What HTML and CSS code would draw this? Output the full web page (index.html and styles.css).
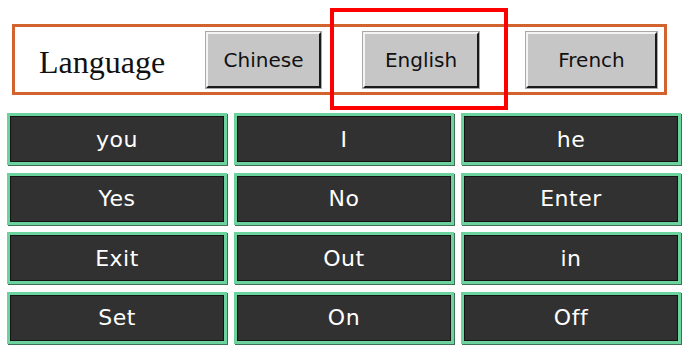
FILE: index.html
```html
<!DOCTYPE html>
<html>
<head>
<meta charset="utf-8">
<link rel="stylesheet" href="styles.css">
</head>
<body>
<div class="page">
  <div class="lang-bar">
    <span class="lang-label">Language</span>
    <button class="lang-btn btn-chinese">Chinese</button>
    <button class="lang-btn btn-english">English</button>
    <button class="lang-btn btn-french">French</button>
  </div>
  <div class="highlight"></div>
  <div class="grid">
    <button class="word">you</button>
    <button class="word">I</button>
    <button class="word">he</button>
    <button class="word">Yes</button>
    <button class="word">No</button>
    <button class="word">Enter</button>
    <button class="word">Exit</button>
    <button class="word">Out</button>
    <button class="word">in</button>
    <button class="word">Set</button>
    <button class="word">On</button>
    <button class="word">Off</button>
  </div>
</div>
</body>
</html>
```

FILE: styles.css
```css
html, body {
  margin: 0;
  padding: 0;
  background: #ffffff;
}
.page {
  position: relative;
  width: 688px;
  height: 353px;
  padding-top: 24px;
  box-sizing: border-box;
}
.lang-bar {
  margin-left: 12px;
  width: 655px;
  height: 71px;
  box-sizing: border-box;
  border: 3px solid #d2632e;
  display: flex;
  align-items: center;
}
.lang-label {
  font-family: "Liberation Serif", serif;
  font-size: 32px;
  color: #111;
  margin-left: 24px;
  margin-top: 6px;
  width: 167px;
}
.lang-btn {
  font-family: "DejaVu Sans", sans-serif;
  font-size: 20px;
  color: #111;
  background: #c6c6c6;
  height: 56px;
  box-sizing: border-box;
  border: 2px solid;
  border-color: #f4f4f4 #1a1a1a #1a1a1a #f4f4f4;
  box-shadow: 0 0 0 1px #a8a8a8;
  padding: 0;
  margin-top: 1px;
}
.btn-chinese { width: 115px; margin-left: 0; }
.btn-english { width: 116px; margin-left: 42px; }
.btn-french { width: 131px; margin-left: 47px; }
.highlight {
  position: absolute;
  left: 330px;
  top: 8px;
  width: 178px;
  height: 102px;
  box-sizing: border-box;
  border: 4px solid #ff0000;
}
.grid {
  margin-top: 18px;
  margin-left: 7px;
  display: grid;
  grid-template-columns: repeat(3, 220px);
  grid-auto-rows: 52px;
  column-gap: 7px;
  row-gap: 7.5px;
}
.word {
  font-family: "DejaVu Sans", sans-serif;
  font-size: 22px;
  letter-spacing: 0.5px;
  color: #ffffff;
  background: #313131;
  box-sizing: border-box;
  border: 3px solid #6cd39e;
  box-shadow: inset 0 0 0 1px #141414, 1px 1px 0 #3f6f57;
  padding: 0;
}
```
